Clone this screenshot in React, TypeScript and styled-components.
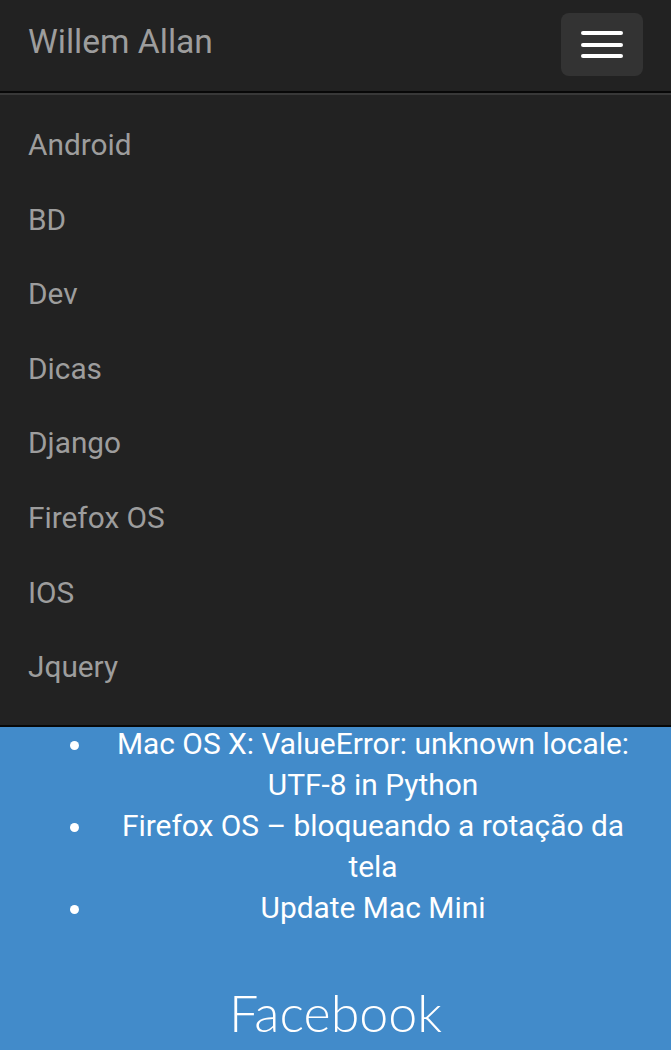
import React from "react";
import styled, { createGlobalStyle } from "styled-components";

const Global = createGlobalStyle`
  html, body { margin: 0; padding: 0; background: #428bca; }
  body { font-family: Roboto, "Noto Sans", sans-serif; }
  * { box-sizing: border-box; }
`;

const Navbar = styled.header`
  background: #222222;
  border-bottom: 2px solid #080808;
`;

const HeaderRow = styled.div`
  height: 93px;
  padding: 0 28px;
  display: flex;
  align-items: center;
  justify-content: space-between;
  border-bottom: 2px solid #080808;
`;

const Brand = styled.a`
  font-family: Roboto, sans-serif;
  font-size: 33.6px;
  color: #9d9d9d;
  text-decoration: none;
  margin-top: -8px;
`;

const Toggle = styled.button`
  width: 82px;
  height: 63px;
  margin-top: -2px;
  background: #333333;
  border: none;
  border-radius: 8px;
  display: flex;
  flex-direction: column;
  align-items: center;
  justify-content: center;
  gap: 7.5px;
  padding: 0;
`;

const Bar = styled.span`
  display: block;
  width: 42px;
  height: 4px;
  border-radius: 2px;
  background: #ffffff;
`;

const Collapse = styled.nav`
  box-shadow: inset 0 2px 0 rgba(255, 255, 255, 0.1);
  padding: 15px 0 20px;
`;

const NavList = styled.ul`
  list-style: none;
  margin: 0;
  padding: 0;
`;

const NavItem = styled.li`
  height: 74.6px;
  line-height: 74.6px;
  padding-left: 28px;
  font-size: 29.8px;
  color: #9d9d9d;
`;

const Main = styled.main`
  display: flow-root;
  background: #428bca;
  padding: 0 28px 20px;
  color: #ffffff;
`;

const PostList = styled.ul`
  margin: -4px 0 0;
  padding-left: 67px;
  text-align: center;
  font-family: Roboto, sans-serif;
  font-size: 29.9px;
  line-height: 41px;
`;

const Post = styled.li`
  padding-left: 8px;
`;

const Heading = styled.h2`
  margin: 56px 0 0;
  font-family: Lato, sans-serif;
  font-weight: 300;
  font-size: 52px;
  line-height: 1.1;
  text-align: center;
`;

const categories = ["Android", "BD", "Dev", "Dicas", "Django", "Firefox OS", "IOS", "Jquery"];
const posts = [
  "Mac OS X: ValueError: unknown locale: UTF-8 in Python",
  "Firefox OS – bloqueando a rotação da tela",
  "Update Mac Mini",
];

export default function App() {
  return (
    <>
      <Global />
      <Navbar>
        <HeaderRow>
          <Brand href="#">Willem Allan</Brand>
          <Toggle aria-label="menu">
            <Bar />
            <Bar />
            <Bar />
          </Toggle>
        </HeaderRow>
        <Collapse>
          <NavList>
            {categories.map((c) => (
              <NavItem key={c}>{c}</NavItem>
            ))}
          </NavList>
        </Collapse>
      </Navbar>
      <Main>
        <PostList>
          {posts.map((p) => (
            <Post key={p}>{p}</Post>
          ))}
        </PostList>
        <Heading>Facebook</Heading>
      </Main>
    </>
  );
}
